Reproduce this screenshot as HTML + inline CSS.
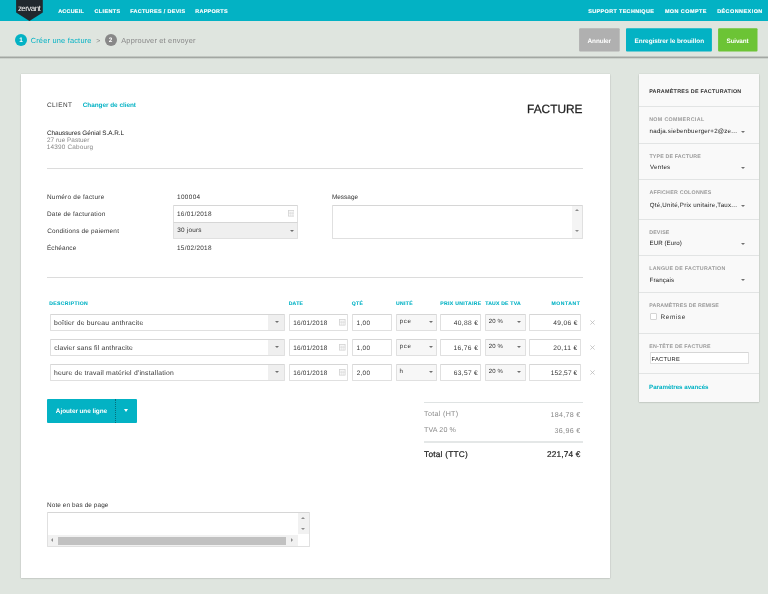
<!DOCTYPE html>
<html><head><meta charset="utf-8">
<style>
*{box-sizing:border-box;margin:0;padding:0}
html,body{width:768px;height:594px;overflow:hidden}
body{background:#dfe5df;font-family:"Liberation Sans",sans-serif;position:relative}
.x{position:absolute;white-space:pre;line-height:1;text-rendering:geometricPrecision}
.a{position:absolute}
.bx{position:absolute;border:1px solid #e0e0e0;border-top-color:#d6d6d6;background:#fff;border-radius:1px}
.ar{position:absolute;width:0;height:0;border-left:2.1px solid transparent;border-right:2.1px solid transparent;border-top:2.3px solid #707070}
.hr{position:absolute;height:1px;background:#dcdcdc}
</style></head><body>
<div class="a" style="left:0;top:21px;width:768px;height:35px;background:#dfe5df"></div>
<div class="a" style="left:0;top:55.6px;width:768px;height:3.4px;background:linear-gradient(to bottom,rgba(0,0,0,0),rgba(0,0,0,.2) 25%,rgba(0,0,0,.3) 45%,rgba(0,0,0,.14) 72%,rgba(0,0,0,0))"></div>
<div class="a" style="left:0;top:0;width:768px;height:21px;background:#03b2c4"></div>
<svg class="a" style="left:16px;top:0" width="28" height="23" viewBox="0 0 28 23"><path d="M.1 0H26.8V12.6L13.45 20.9L.1 12.6Z" fill="#21282e"/></svg>
<div class="a" style="left:15px;top:34px;width:12px;height:12px;border-radius:50%;background:#03b2c4"></div>
<div class="a" style="left:104.8px;top:34px;width:12px;height:12px;border-radius:50%;background:#888"></div>
<svg class="a" style="left:579px;top:28px" width="41" height="24"><rect x="0.10" y="0.30" width="40.60" height="23.20" rx="1" fill="#b0b0b0"/></svg>
<svg class="a" style="left:626px;top:28px" width="86" height="24"><rect x="0.00" y="0.30" width="85.90" height="23.20" rx="1" fill="#03b2c4"/></svg>
<svg class="a" style="left:718px;top:28px" width="40" height="24"><rect x="0.10" y="0.30" width="39.40" height="23.20" rx="1" fill="#6cc435"/></svg>
<div class="a" style="left:20.5px;top:74px;width:589px;height:503.5px;background:#fff;box-shadow:0 0 1px rgba(0,0,0,.16),0 .8px 1.6px rgba(0,0,0,.16)"></div>
<div class="a" style="left:638.6px;top:73.6px;width:120.6px;height:328.8px;background:#f9f9f9;box-shadow:0 0 1px rgba(0,0,0,.16),0 .8px 1.6px rgba(0,0,0,.18)"></div>
<div class="hr" style="left:47.3px;top:168px;width:535.7px"></div>
<div class="hr" style="left:47.3px;top:277px;width:535.7px"></div>
<div class="bx" style="left:173px;top:205px;width:124.8px;height:17.5px"></div>
<div class="bx" style="left:173px;top:221.7px;width:124.8px;height:17px;background:#efefef"></div>
<div class="ar" style="left:290.3px;top:230px"></div>
<svg class="a" style="left:287.7px;top:210.4px" width="6.5" height="6.5" viewBox="0 0 6.5 6.5"><rect x=".4" y=".4" width="5.7" height="5.7" fill="none" stroke="#d2d2d2" stroke-width=".8"/><path d="M.4 2.1H6.1M.4 3.7H6.1M2.3 2.1V6.1M4.2 2.1V6.1" stroke="#d2d2d2" stroke-width=".5"/></svg>
<div class="bx" style="left:332.3px;top:204.8px;width:250.4px;height:34px"></div>
<div class="a" style="left:572px;top:205.8px;width:9.7px;height:32px;background:#f4f4f4"></div>
<div class="a" style="left:575.0px;top:209.3px;width:0;height:0;border-left:2.5px solid transparent;border-right:2.5px solid transparent;border-bottom:2.7px solid #8c8c8c"></div>
<div class="a" style="left:575.0px;top:230.3px;width:0;height:0;border-left:2.5px solid transparent;border-right:2.5px solid transparent;border-top:2.7px solid #8c8c8c"></div>
<div class="bx" style="left:49.5px;top:314px;width:235.2px;height:17px"></div>
<div class="a" style="left:268px;top:315px;width:15.7px;height:15px;background:#efefef"></div>
<div class="ar" style="left:274.5px;top:320.9px"></div>
<div class="bx" style="left:289px;top:314px;width:58.6px;height:17px"></div>
<svg class="a" style="left:339.4px;top:319.3px" width="6.5" height="6.5" viewBox="0 0 6.5 6.5"><rect x=".4" y=".4" width="5.7" height="5.7" fill="none" stroke="#d2d2d2" stroke-width=".8"/><path d="M.4 2.1H6.1M.4 3.7H6.1M2.3 2.1V6.1M4.2 2.1V6.1" stroke="#d2d2d2" stroke-width=".5"/></svg>
<div class="bx" style="left:352px;top:314px;width:40.2px;height:17px"></div>
<div class="bx" style="left:396.2px;top:314px;width:40.4px;height:17px;background:#f7f7f7"></div>
<div class="ar" style="left:428.9px;top:320.9px"></div>
<div class="bx" style="left:440px;top:314px;width:41px;height:17px"></div>
<div class="bx" style="left:485px;top:314px;width:41px;height:17px;background:#f7f7f7"></div>
<div class="ar" style="left:517.3px;top:320.9px"></div>
<div class="bx" style="left:529.2px;top:314px;width:51.4px;height:17px"></div>
<svg class="a" style="left:590px;top:320px" width="5" height="5" viewBox="0 0 5 5"><path d="M.4 .4L4.6 4.6M4.6 .4L.4 4.6" stroke="#b5b5b5" stroke-width=".7"/></svg>
<div class="bx" style="left:49.5px;top:339px;width:235.2px;height:17px"></div>
<div class="a" style="left:268px;top:340px;width:15.7px;height:15px;background:#efefef"></div>
<div class="ar" style="left:274.5px;top:345.9px"></div>
<div class="bx" style="left:289px;top:339px;width:58.6px;height:17px"></div>
<svg class="a" style="left:339.4px;top:344.3px" width="6.5" height="6.5" viewBox="0 0 6.5 6.5"><rect x=".4" y=".4" width="5.7" height="5.7" fill="none" stroke="#d2d2d2" stroke-width=".8"/><path d="M.4 2.1H6.1M.4 3.7H6.1M2.3 2.1V6.1M4.2 2.1V6.1" stroke="#d2d2d2" stroke-width=".5"/></svg>
<div class="bx" style="left:352px;top:339px;width:40.2px;height:17px"></div>
<div class="bx" style="left:396.2px;top:339px;width:40.4px;height:17px;background:#f7f7f7"></div>
<div class="ar" style="left:428.9px;top:345.9px"></div>
<div class="bx" style="left:440px;top:339px;width:41px;height:17px"></div>
<div class="bx" style="left:485px;top:339px;width:41px;height:17px;background:#f7f7f7"></div>
<div class="ar" style="left:517.3px;top:345.9px"></div>
<div class="bx" style="left:529.2px;top:339px;width:51.4px;height:17px"></div>
<svg class="a" style="left:590px;top:345px" width="5" height="5" viewBox="0 0 5 5"><path d="M.4 .4L4.6 4.6M4.6 .4L.4 4.6" stroke="#b5b5b5" stroke-width=".7"/></svg>
<div class="bx" style="left:49.5px;top:364px;width:235.2px;height:17px"></div>
<div class="a" style="left:268px;top:365px;width:15.7px;height:15px;background:#efefef"></div>
<div class="ar" style="left:274.5px;top:370.9px"></div>
<div class="bx" style="left:289px;top:364px;width:58.6px;height:17px"></div>
<svg class="a" style="left:339.4px;top:369.3px" width="6.5" height="6.5" viewBox="0 0 6.5 6.5"><rect x=".4" y=".4" width="5.7" height="5.7" fill="none" stroke="#d2d2d2" stroke-width=".8"/><path d="M.4 2.1H6.1M.4 3.7H6.1M2.3 2.1V6.1M4.2 2.1V6.1" stroke="#d2d2d2" stroke-width=".5"/></svg>
<div class="bx" style="left:352px;top:364px;width:40.2px;height:17px"></div>
<div class="bx" style="left:396.2px;top:364px;width:40.4px;height:17px;background:#f7f7f7"></div>
<div class="ar" style="left:428.9px;top:370.9px"></div>
<div class="bx" style="left:440px;top:364px;width:41px;height:17px"></div>
<div class="bx" style="left:485px;top:364px;width:41px;height:17px;background:#f7f7f7"></div>
<div class="ar" style="left:517.3px;top:370.9px"></div>
<div class="bx" style="left:529.2px;top:364px;width:51.4px;height:17px"></div>
<svg class="a" style="left:590px;top:370px" width="5" height="5" viewBox="0 0 5 5"><path d="M.4 .4L4.6 4.6M4.6 .4L.4 4.6" stroke="#b5b5b5" stroke-width=".7"/></svg>
<div class="a" style="left:47px;top:398.5px;width:90px;height:24.6px;background:#03b2c4;border-radius:1px"></div>
<div class="a" style="left:115px;top:398.5px;width:0;height:24.6px;border-left:.8px dotted #056f7b"></div>
<div class="a" style="left:124px;top:409px;width:0;height:0;border-left:2.9px solid transparent;border-right:2.9px solid transparent;border-top:3.7px solid #fff"></div>
<div class="hr" style="left:424.3px;top:401.6px;width:158.7px;background:#dfe3e3"></div>
<div class="hr" style="left:424.3px;top:441.3px;width:158.7px;height:1.4px;background:#e4e7e7"></div>
<div class="bx" style="left:47.4px;top:512.4px;width:262.4px;height:34.2px"></div>
<div class="a" style="left:48.4px;top:535.4px;width:249.4px;height:10.2px;background:#f1f1f1"></div>
<div class="a" style="left:298.3px;top:513.4px;width:10.5px;height:20.6px;background:#f1f1f1"></div>
<div class="a" style="left:58px;top:536.5px;width:227.8px;height:8px;background:#c1c1c1"></div>
<div class="a" style="left:301.2px;top:517.4px;width:0;height:0;border-left:2.5px solid transparent;border-right:2.5px solid transparent;border-bottom:2.7px solid #8c8c8c"></div>
<div class="a" style="left:301.2px;top:527.7px;width:0;height:0;border-left:2.5px solid transparent;border-right:2.5px solid transparent;border-top:2.7px solid #8c8c8c"></div>
<div class="a" style="left:51.3px;top:538.3px;width:0;height:0;border-top:2.3px solid transparent;border-bottom:2.3px solid transparent;border-right:2.7px solid #8c8c8c"></div>
<div class="a" style="left:291px;top:538.3px;width:0;height:0;border-top:2.3px solid transparent;border-bottom:2.3px solid transparent;border-left:2.7px solid #8c8c8c"></div>
<div class="hr" style="left:638.6px;top:105.8px;width:120.6px;background:#e2e4e4"></div>
<div class="hr" style="left:638.6px;top:142.5px;width:120.6px;background:#e2e4e4"></div>
<div class="hr" style="left:638.6px;top:178.5px;width:120.6px;background:#e2e4e4"></div>
<div class="hr" style="left:638.6px;top:218.8px;width:120.6px;background:#e2e4e4"></div>
<div class="hr" style="left:638.6px;top:255.2px;width:120.6px;background:#e2e4e4"></div>
<div class="hr" style="left:638.6px;top:291.75px;width:120.6px;background:#e2e4e4"></div>
<div class="hr" style="left:638.6px;top:333.0px;width:120.6px;background:#e2e4e4"></div>
<div class="hr" style="left:638.6px;top:372.9px;width:120.6px;background:#e2e4e4"></div>
<div class="ar" style="left:741px;top:130.6px"></div>
<div class="ar" style="left:741px;top:167.2px"></div>
<div class="ar" style="left:741px;top:204.5px"></div>
<div class="ar" style="left:741px;top:243px"></div>
<div class="ar" style="left:741px;top:279px"></div>
<div class="bx" style="left:649.5px;top:312.7px;width:7.3px;height:7px;border-color:#d4d4d4;border-radius:1px"></div>
<div class="bx" style="left:649.5px;top:352.4px;width:99.2px;height:12px;border-radius:1px"></div>
<div style="position:absolute;left:0;top:0;width:768px;height:594px;will-change:transform">
<span class="x" style="left:58.14px;top:9.99px;font-size:5.45px;color:#fff;letter-spacing:0.255px;font-weight:bold;-webkit-text-stroke:0.15px #fff">ACCUEIL</span>
<span class="x" style="left:94.53px;top:9.99px;font-size:5.45px;color:#fff;letter-spacing:0.393px;font-weight:bold;-webkit-text-stroke:0.15px #fff">CLIENTS</span>
<span class="x" style="left:130.15px;top:9.99px;font-size:5.45px;color:#fff;letter-spacing:0.319px;font-weight:bold;-webkit-text-stroke:0.15px #fff">FACTURES / DEVIS</span>
<span class="x" style="left:195.15px;top:9.99px;font-size:5.45px;color:#fff;letter-spacing:0.325px;font-weight:bold;-webkit-text-stroke:0.15px #fff">RAPPORTS</span>
<span class="x" style="left:588.36px;top:9.99px;font-size:5.45px;color:#fff;letter-spacing:0.352px;font-weight:bold;-webkit-text-stroke:0.15px #fff">SUPPORT TECHNIQUE</span>
<span class="x" style="left:664.90px;top:9.99px;font-size:5.45px;color:#fff;letter-spacing:0.446px;font-weight:bold;-webkit-text-stroke:0.15px #fff">MON COMPTE</span>
<span class="x" style="left:717.15px;top:9.99px;font-size:5.45px;color:#fff;letter-spacing:0.464px;font-weight:bold;-webkit-text-stroke:0.15px #fff">DÉCONNEXION</span>
<span class="x" style="left:17.88px;top:4.93px;font-size:8.00px;color:#f4f4f4;letter-spacing:-0.549px">zervant</span>
<span class="x" style="left:30.63px;top:37.34px;font-size:7.40px;color:#03b2c4;letter-spacing:0.209px">Créer une facture</span>
<span class="x" style="left:96.19px;top:37.67px;font-size:7.00px;color:#888">&gt;</span>
<span class="x" style="left:121.25px;top:37.34px;font-size:7.40px;color:#888;letter-spacing:0.189px">Approuver et envoyer</span>
<span class="x" style="left:19.22px;top:37.88px;font-size:6.40px;color:#fff;font-weight:bold">1</span>
<span class="x" style="left:108.81px;top:37.88px;font-size:6.40px;color:#fff;font-weight:bold">2</span>
<span class="x" style="left:587.62px;top:38.58px;font-size:6.40px;color:#fff;letter-spacing:-0.118px;font-weight:bold">Annuler</span>
<span class="x" style="left:634.58px;top:38.58px;font-size:6.40px;color:#fff;letter-spacing:-0.037px;font-weight:bold">Enregistrer le brouillon</span>
<span class="x" style="left:726.59px;top:38.58px;font-size:6.40px;color:#fff;letter-spacing:-0.192px;font-weight:bold">Suivant</span>
<span class="x" style="left:46.93px;top:102.58px;font-size:6.40px;color:#333;letter-spacing:0.439px">CLIENT</span>
<span class="x" style="left:82.74px;top:103.38px;font-size:6.40px;color:#03b2c4;letter-spacing:-0.025px;font-weight:bold">Changer de client</span>
<span class="x" style="left:527.05px;top:103.63px;font-size:11.90px;color:#222;letter-spacing:-0.014px;-webkit-text-stroke:0.25px #222">FACTURE</span>
<span class="x" style="left:46.93px;top:130.58px;font-size:6.40px;color:#222;letter-spacing:-0.041px">Chaussures Génial S.A.R.L</span>
<span class="x" style="left:46.93px;top:137.83px;font-size:6.40px;color:#888;letter-spacing:0.032px">27 rue Pastuer</span>
<span class="x" style="left:46.77px;top:144.98px;font-size:6.40px;color:#888;letter-spacing:0.187px">14390 Cabourg</span>
<span class="x" style="left:46.99px;top:195.28px;font-size:6.40px;color:#333;letter-spacing:0.267px">Numéro de facture</span>
<span class="x" style="left:46.99px;top:212.28px;font-size:6.40px;color:#333;letter-spacing:0.240px">Date de facturation</span>
<span class="x" style="left:47.18px;top:229.28px;font-size:6.40px;color:#333;letter-spacing:0.219px">Conditions de paiement</span>
<span class="x" style="left:46.99px;top:246.28px;font-size:6.40px;color:#333;letter-spacing:0.116px">Échéance</span>
<span class="x" style="left:177.02px;top:194.83px;font-size:6.40px;color:#333;letter-spacing:0.358px">100004</span>
<span class="x" style="left:177.02px;top:212.33px;font-size:6.40px;color:#333;letter-spacing:0.274px">16/01/2018</span>
<span class="x" style="left:177.28px;top:228.33px;font-size:6.40px;color:#333;letter-spacing:0.204px">30 jours</span>
<span class="x" style="left:177.02px;top:246.33px;font-size:6.40px;color:#333;letter-spacing:0.274px">15/02/2018</span>
<span class="x" style="left:331.89px;top:194.83px;font-size:6.40px;color:#333;letter-spacing:0.051px">Message</span>
<span class="x" style="left:49.17px;top:302.18px;font-size:5.10px;color:#03b2c4;letter-spacing:0.382px;font-weight:bold;-webkit-text-stroke:0.12px #03b2c4">DESCRIPTION</span>
<span class="x" style="left:288.67px;top:302.18px;font-size:5.10px;color:#03b2c4;letter-spacing:0.255px;font-weight:bold;-webkit-text-stroke:0.12px #03b2c4">DATE</span>
<span class="x" style="left:351.80px;top:302.18px;font-size:5.10px;color:#03b2c4;letter-spacing:0.329px;font-weight:bold;-webkit-text-stroke:0.12px #03b2c4">QTÉ</span>
<span class="x" style="left:395.94px;top:302.18px;font-size:5.10px;color:#03b2c4;letter-spacing:0.361px;font-weight:bold;-webkit-text-stroke:0.12px #03b2c4">UNITÉ</span>
<span class="x" style="left:440.17px;top:302.18px;font-size:5.10px;color:#03b2c4;letter-spacing:0.333px;font-weight:bold;-webkit-text-stroke:0.12px #03b2c4">PRIX UNITAIRE</span>
<span class="x" style="left:485.20px;top:302.18px;font-size:5.10px;color:#03b2c4;letter-spacing:0.217px;font-weight:bold;-webkit-text-stroke:0.12px #03b2c4">TAUX DE TVA</span>
<span class="x" style="left:551.42px;top:302.18px;font-size:5.10px;color:#03b2c4;letter-spacing:0.582px;font-weight:bold;-webkit-text-stroke:0.12px #03b2c4">MONTANT</span>
<span class="x" style="left:54.09px;top:320.79px;font-size:6.75px;color:#333;letter-spacing:0.245px">boîtier de bureau anthracite</span>
<span class="x" style="left:293.27px;top:321.08px;font-size:6.40px;color:#333;letter-spacing:0.218px">16/01/2018</span>
<span class="x" style="left:356.52px;top:321.08px;font-size:6.40px;color:#333;letter-spacing:0.335px">1,00</span>
<span class="x" style="left:399.63px;top:318.84px;font-size:6.10px;color:#333;letter-spacing:0.766px">pce</span>
<span class="x" style="left:453.87px;top:320.91px;font-size:6.60px;color:#333;letter-spacing:0.323px">40,88 €</span>
<span class="x" style="left:488.70px;top:318.92px;font-size:6.00px;color:#333;letter-spacing:0.193px">20 %</span>
<span class="x" style="left:553.37px;top:320.91px;font-size:6.60px;color:#333;letter-spacing:0.323px">49,06 €</span>
<span class="x" style="left:54.23px;top:345.79px;font-size:6.75px;color:#333;letter-spacing:0.178px">clavier sans fil anthracite</span>
<span class="x" style="left:293.27px;top:346.08px;font-size:6.40px;color:#333;letter-spacing:0.218px">16/01/2018</span>
<span class="x" style="left:356.52px;top:346.08px;font-size:6.40px;color:#333;letter-spacing:0.335px">1,00</span>
<span class="x" style="left:399.63px;top:343.84px;font-size:6.10px;color:#333;letter-spacing:0.766px">pce</span>
<span class="x" style="left:453.50px;top:345.91px;font-size:6.60px;color:#333;letter-spacing:0.383px">16,76 €</span>
<span class="x" style="left:488.70px;top:343.92px;font-size:6.00px;color:#333;letter-spacing:0.193px">20 %</span>
<span class="x" style="left:553.17px;top:345.91px;font-size:6.60px;color:#333;letter-spacing:0.437px">20,11 €</span>
<span class="x" style="left:54.06px;top:370.79px;font-size:6.75px;color:#333;letter-spacing:0.215px">heure de travail matériel d&#x27;installation</span>
<span class="x" style="left:293.27px;top:371.08px;font-size:6.40px;color:#333;letter-spacing:0.218px">16/01/2018</span>
<span class="x" style="left:356.68px;top:371.08px;font-size:6.40px;color:#333;letter-spacing:0.282px">2,00</span>
<span class="x" style="left:399.60px;top:368.84px;font-size:6.10px;color:#333">h</span>
<span class="x" style="left:453.67px;top:370.91px;font-size:6.60px;color:#333;letter-spacing:0.356px">63,57 €</span>
<span class="x" style="left:488.70px;top:368.92px;font-size:6.00px;color:#333;letter-spacing:0.193px">20 %</span>
<span class="x" style="left:550.75px;top:370.91px;font-size:6.60px;color:#333;letter-spacing:0.125px">152,57 €</span>
<span class="x" style="left:55.87px;top:408.58px;font-size:6.40px;color:#fff;letter-spacing:-0.059px;font-weight:bold">Ajouter une ligne</span>
<span class="x" style="left:424.11px;top:410.74px;font-size:7.10px;color:#888;letter-spacing:0.321px">Total (HT)</span>
<span class="x" style="left:550.47px;top:412.49px;font-size:7.10px;color:#888;letter-spacing:0.318px">184,78 €</span>
<span class="x" style="left:424.11px;top:426.99px;font-size:7.10px;color:#888;letter-spacing:0.100px">TVA 20 %</span>
<span class="x" style="left:554.50px;top:428.49px;font-size:7.10px;color:#888;letter-spacing:0.357px">36,96 €</span>
<span class="x" style="left:424.08px;top:449.72px;font-size:8.30px;color:#222;letter-spacing:0.215px;-webkit-text-stroke:0.2px #222">Total (TTC)</span>
<span class="x" style="left:547.09px;top:449.72px;font-size:8.30px;color:#222;letter-spacing:0.136px;-webkit-text-stroke:0.2px #222">221,74 €</span>
<span class="x" style="left:46.99px;top:503.48px;font-size:6.40px;color:#333;letter-spacing:0.117px">Note en bas de page</span>
<span class="x" style="left:649.15px;top:90.23px;font-size:5.40px;color:#333;letter-spacing:0.251px;font-weight:bold">PARAMÈTRES DE FACTURATION</span>
<span class="x" style="left:649.16px;top:117.51px;font-size:5.30px;color:#9a9a9a;letter-spacing:0.357px;font-weight:bold">NOM COMMERCIAL</span>
<span class="x" style="left:649.45px;top:155.01px;font-size:5.30px;color:#9a9a9a;letter-spacing:0.148px;font-weight:bold">TYPE DE FACTURE</span>
<span class="x" style="left:649.39px;top:190.51px;font-size:5.30px;color:#9a9a9a;letter-spacing:0.231px;font-weight:bold">AFFICHER COLONNES</span>
<span class="x" style="left:649.16px;top:231.26px;font-size:5.30px;color:#9a9a9a;letter-spacing:0.160px;font-weight:bold">DEVISE</span>
<span class="x" style="left:649.16px;top:266.51px;font-size:5.30px;color:#9a9a9a;letter-spacing:0.296px;font-weight:bold">LANGUE DE FACTURATION</span>
<span class="x" style="left:649.16px;top:303.51px;font-size:5.30px;color:#9a9a9a;letter-spacing:0.127px;font-weight:bold">PARAMÈTRES DE REMISE</span>
<span class="x" style="left:649.16px;top:345.01px;font-size:5.30px;color:#9a9a9a;letter-spacing:0.202px;font-weight:bold">EN-TÊTE DE FACTURE</span>
<span class="x" style="left:649.60px;top:129.29px;font-size:6.15px;color:#222;letter-spacing:0.249px">nadja.siebenbuerger+2@ze...</span>
<span class="x" style="left:650.00px;top:164.54px;font-size:6.15px;color:#222;letter-spacing:0.282px">Ventes</span>
<span class="x" style="left:649.72px;top:202.79px;font-size:6.15px;color:#222;letter-spacing:0.244px">Qté,Unité,Prix unitaire,Taux...</span>
<span class="x" style="left:649.51px;top:241.39px;font-size:6.15px;color:#222;letter-spacing:0.063px">EUR (Euro)</span>
<span class="x" style="left:649.51px;top:277.54px;font-size:6.15px;color:#222;letter-spacing:0.161px">Français</span>
<span class="x" style="left:660.49px;top:315.08px;font-size:6.40px;color:#333;letter-spacing:0.616px">Remise</span>
<span class="x" style="left:651.54px;top:357.87px;font-size:5.70px;color:#222;letter-spacing:0.266px">FACTURE</span>
<span class="x" style="left:649.10px;top:385.35px;font-size:6.20px;color:#03b2c4;letter-spacing:-0.027px;font-weight:bold">Paramètres avancés</span>
</div>
</body></html>
